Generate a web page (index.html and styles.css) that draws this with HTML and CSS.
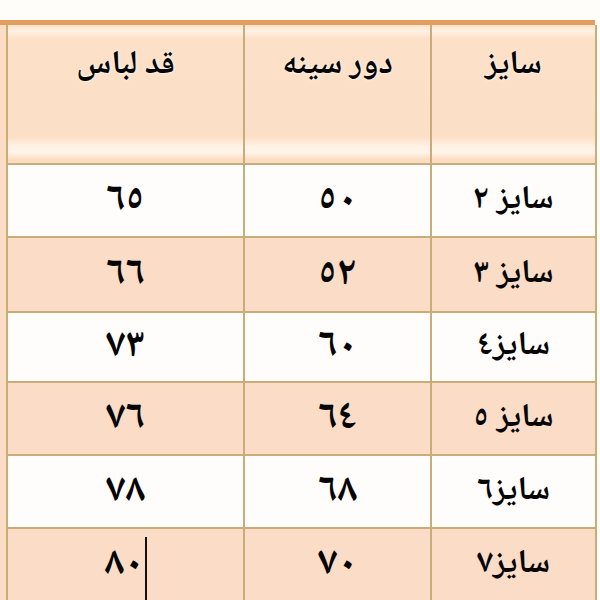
FILE: index.html
```html
<!DOCTYPE html>
<html lang="fa">
<head>
<meta charset="utf-8">
<title>جدول سایز</title>
<link rel="stylesheet" href="styles.css">
</head>
<body>
<div class="page">
  <div class="topbar"></div>
  <div class="sheet">
    <table class="sizes" dir="rtl">
      <colgroup>
        <col class="c-size">
        <col class="c-chest">
        <col class="c-length">
      </colgroup>
      <thead>
        <tr class="head">
          <th>سایز</th>
          <th>دور سینه</th>
          <th>قد لباس</th>
        </tr>
      </thead>
      <tbody>
        <tr class="light"><td>سایز ٢</td><td class="num">٥٠</td><td class="num">٦٥</td></tr>
        <tr class="peach tall"><td>سایز ٣</td><td class="num">٥٢</td><td class="num">٦٦</td></tr>
        <tr class="light short"><td>سایز٤</td><td class="num">٦٠</td><td class="num">٧٣</td></tr>
        <tr class="peach"><td>سایز ٥</td><td class="num">٦٤</td><td class="num">٧٦</td></tr>
        <tr class="light"><td>سایز٦</td><td class="num">٦٨</td><td class="num">٧٨</td></tr>
        <tr class="peach last"><td>سایز٧</td><td class="num">٧٠</td><td class="num"><span class="caret"></span>٨٠</td></tr>
      </tbody>
    </table>
  </div>
</div>
</body>
</html>
```
FILE: styles.css
```css
html, body {
  margin: 0;
  padding: 0;
  background: #fffdfa;
}
body {
  width: 600px;
  height: 600px;
  overflow: hidden;
  font-family: "Noto Naskh Arabic", "Noto Sans Arabic", "DejaVu Sans", sans-serif;
}
.page {
  padding-top: 20px;
  direction: ltr;
}
.topbar {
  width: 595px;
  height: 5px;
  background: #e39d5e;
}
.sheet {
  width: 595px;
  background: #fbdcc5;
  padding-left: 6px;
  box-sizing: border-box;
}
.sizes {
  direction: rtl;
  width: 589px;
  border-collapse: collapse;
  table-layout: fixed;
  color: #050505;
}
.c-size { width: 165px; }
.c-chest { width: 187px; }
.c-length { width: 237px; }

.sizes th,
.sizes td {
  border: 2px solid #c9ad78;
  text-align: center;
  padding: 0;
}
.sizes tr:first-child th { border-top: none; }

.head th {
  height: 139px;
  vertical-align: top;
  padding-top: 13px;
  box-sizing: border-box;
  font-size: 33px;
  font-weight: bold;
  text-shadow: 0 0 3px #ffffff;
  background: linear-gradient(to bottom,
    #fde3cc 0px, #fff1e3 6px, #fde0c8 14px,
    #fcdfc7 112px, #fff3e7 122px, #fff3e7 128px, #fcdcc3 134px);
}

.sizes td {
  height: 71px;
  font-size: 33px;
  font-weight: bold;
  vertical-align: middle;
}
.sizes td.num {
  font-size: 40px;
  letter-spacing: -2px;
}
.sizes tr.tall td { height: 73px; }
.sizes tr.short td { height: 67px; }
.light td { background: #fffdfb; }
.peach td { background: #fbdcc6; }

.caret {
  display: inline-block;
  width: 2px;
  height: 64px;
  background: #111;
  vertical-align: top;
  margin-left: 1px;
  margin-top: 6px;
  margin-bottom: -24px;
}
```
